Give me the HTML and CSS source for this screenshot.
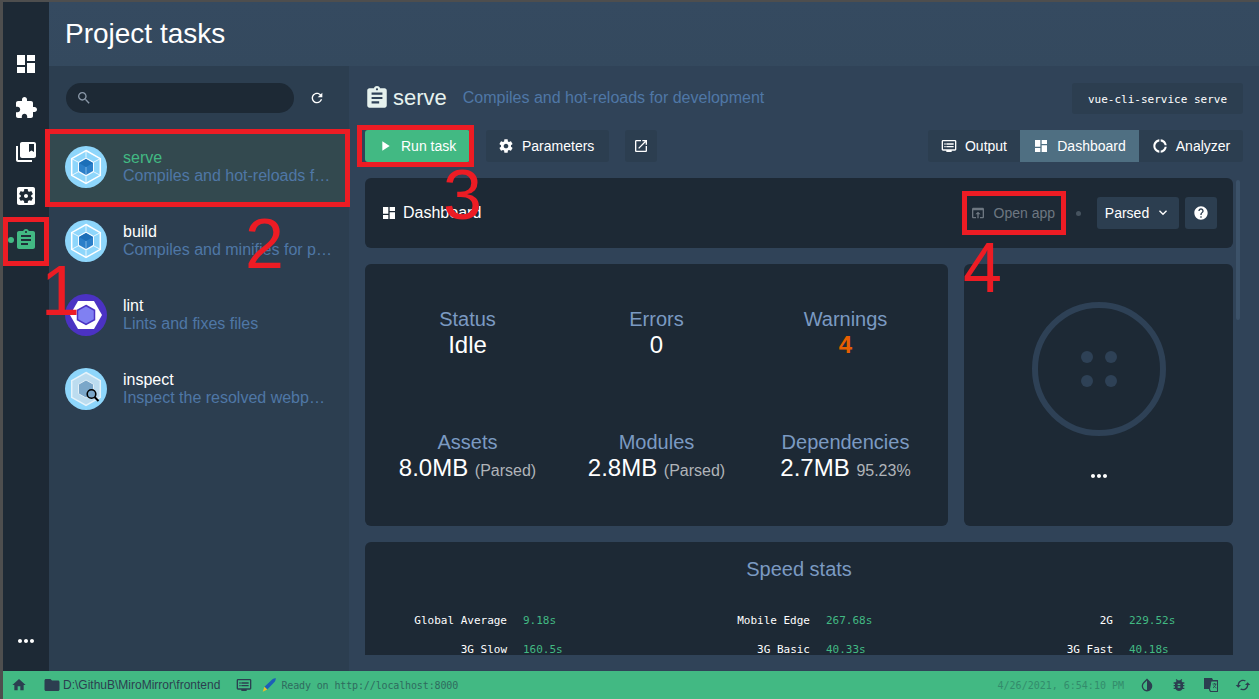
FILE: index.html
```html
<!DOCTYPE html>
<html lang="en">
<head>
    <meta charset="UTF-8">
    <title>Project tasks</title>
    <link rel="stylesheet" href="styles.css">
</head>
<body>
    <svg class="sprite" xmlns="http://www.w3.org/2000/svg">
        <symbol id="i-dashboard" viewBox="0 0 24 24"><path d="M3 13h8V3H3v10zm0 8h8v-6H3v6zm10 0h8V11h-8v10zm0-18v6h8V3h-8z"/></symbol>
        <symbol id="i-extension" viewBox="0 0 24 24"><path d="M20.5 11H19V7c0-1.1-.9-2-2-2h-4V3.5C13 2.12 11.88 1 10.5 1S8 2.12 8 3.5V5H4c-1.1 0-1.99.9-1.99 2v3.8H3.5c1.49 0 2.7 1.21 2.7 2.7s-1.21 2.7-2.7 2.7H2V20c0 1.1.9 2 2 2h3.8v-1.5c0-1.49 1.21-2.7 2.7-2.7 1.49 0 2.7 1.21 2.7 2.7V22H17c1.1 0 2-.9 2-2v-4h1.5c1.38 0 2.5-1.12 2.5-2.5S21.88 11 20.5 11z"/></symbol>
        <symbol id="i-collections" viewBox="0 0 24 24"><path d="M4 6H2v14c0 1.1.9 2 2 2h14v-2H4V6zm16-4H8c-1.1 0-2 .9-2 2v12c0 1.1.9 2 2 2h12c1.1 0 2-.9 2-2V4c0-1.1-.9-2-2-2zm0 10l-2.5-1.5L15 12V4h5v8z"/></symbol>
        <symbol id="i-settings-app" viewBox="0 0 24 24"><path d="M12 10c-1.1 0-2 .9-2 2s.9 2 2 2 2-.9 2-2-.9-2-2-2zm7-7H5c-1.11 0-2 .9-2 2v14c0 1.1.89 2 2 2h14c1.11 0 2-.9 2-2V5c0-1.1-.89-2-2-2zm-1.75 9c0 .23-.02.46-.05.68l1.48 1.16c.13.11.17.3.08.45l-1.4 2.42c-.09.15-.27.21-.43.15l-1.74-.7c-.36.28-.76.51-1.18.69l-.26 1.85c-.03.17-.18.3-.35.3h-2.8c-.17 0-.32-.13-.35-.29l-.26-1.85c-.43-.18-.82-.41-1.18-.69l-1.74.7c-.16.06-.34 0-.43-.15l-1.4-2.42c-.09-.15-.05-.34.08-.45l1.48-1.16c-.03-.23-.05-.46-.05-.69 0-.23.02-.46.05-.68l-1.48-1.16c-.13-.11-.17-.3-.08-.45l1.4-2.42c.09-.15.27-.21.43-.15l1.74.7c.36-.28.76-.51 1.18-.69l.26-1.85c.03-.17.18-.3.35-.3h2.8c.17 0 .32.13.35.29l.26 1.85c.43.18.82.41 1.18.69l1.74-.7c.16-.06.34 0 .43.15l1.4 2.42c.09.15.05.34-.08.45l-1.48 1.16c.03.23.05.46.05.69z"/></symbol>
        <symbol id="i-assignment" viewBox="0 0 24 24"><path d="M19 3h-4.18C14.4 1.84 13.3 1 12 1c-1.3 0-2.4.84-2.82 2H5c-1.1 0-2 .9-2 2v14c0 1.1.9 2 2 2h14c1.1 0 2-.9 2-2V5c0-1.1-.9-2-2-2zm-7 0c.55 0 1 .45 1 1s-.45 1-1 1-1-.45-1-1 .45-1 1-1zm2 14H7v-2h7v2zm3-4H7v-2h10v2zm0-4H7V7h10v2z"/></symbol>
        <symbol id="i-more" viewBox="0 0 24 24"><path d="M6 10c-1.1 0-2 .9-2 2s.9 2 2 2 2-.9 2-2-.9-2-2-2zm12 0c-1.1 0-2 .9-2 2s.9 2 2 2 2-.9 2-2-.9-2-2-2zm-6 0c-1.1 0-2 .9-2 2s.9 2 2 2 2-.9 2-2-.9-2-2-2z"/></symbol>
        <symbol id="i-search" viewBox="0 0 24 24"><path d="M15.5 14h-.79l-.28-.27C15.41 12.59 16 11.11 16 9.5 16 5.91 13.09 3 9.5 3S3 5.91 3 9.5 5.91 16 9.5 16c1.61 0 3.09-.59 4.23-1.57l.27.28v.79l5 4.99L20.49 19l-4.99-5zm-6 0C7.01 14 5 11.99 5 9.5S7.01 5 9.5 5 14 7.01 14 9.5 11.99 14 9.5 14z"/></symbol>
        <symbol id="i-refresh" viewBox="0 0 24 24"><path d="M17.65 6.35C16.2 4.9 14.21 4 12 4c-4.42 0-7.99 3.58-7.99 8s3.57 8 7.99 8c3.73 0 6.84-2.55 7.73-6h-2.08c-.82 2.33-3.04 4-5.65 4-3.31 0-6-2.69-6-6s2.69-6 6-6c1.66 0 3.14.69 4.22 1.78L13 11h7V4l-2.35 2.35z"/></symbol>
        <symbol id="i-play" viewBox="0 0 24 24"><path d="M8 5v14l11-7z"/></symbol>
        <symbol id="i-settings" viewBox="0 0 24 24"><path d="M19.43 12.98c.04-.32.07-.64.07-.98s-.03-.66-.07-.98l2.11-1.65c.19-.15.24-.42.12-.64l-2-3.46c-.12-.22-.39-.3-.61-.22l-2.49 1c-.52-.4-1.08-.73-1.69-.98l-.38-2.65C14.46 2.18 14.25 2 14 2h-4c-.25 0-.46.18-.49.42l-.38 2.65c-.61.25-1.17.59-1.69.98l-2.49-1c-.23-.09-.49 0-.61.22l-2 3.46c-.13.22-.07.49.12.64l2.11 1.65c-.04.32-.07.65-.07.98s.03.66.07.98l-2.11 1.65c-.19.15-.24.42-.12.64l2 3.46c.12.22.39.3.61.22l2.49-1c.52.4 1.08.73 1.69.98l.38 2.65c.03.24.24.42.49.42h4c.25 0 .46-.18.49-.42l.38-2.65c.61-.25 1.17-.59 1.69-.98l2.49 1c.23.09.49 0 .61-.22l2-3.46c.12-.22.07-.49-.12-.64l-2.11-1.65zM12 15.5c-1.93 0-3.5-1.57-3.5-3.5s1.57-3.5 3.5-3.5 3.5 1.57 3.5 3.5-1.57 3.5-3.5 3.5z"/></symbol>
        <symbol id="i-open" viewBox="0 0 24 24"><path d="M19 19H5V5h7V3H5c-1.11 0-2 .9-2 2v14c0 1.1.89 2 2 2h14c1.1 0 2-.9 2-2v-7h-2v7zM14 3v2h3.59l-9.83 9.83 1.41 1.41L19 6.41V10h2V3h-7z"/></symbol>
        <symbol id="i-dvr" viewBox="0 0 24 24"><path d="M21 3H3c-1.1 0-2 .9-2 2v12c0 1.1.9 2 2 2h5v2h8v-2h5c1.1 0 1.99-.9 1.99-2L23 5c0-1.1-.9-2-2-2zm0 14H3V5h18v12zm-2-9H8v2h11V8zm0 4H8v2h11v-2zM7 8H5v2h2V8zm0 4H5v2h2v-2z"/></symbol>
        <symbol id="i-donut" viewBox="0 0 24 24"><path d="M11 5.08V2c-5 .5-9 4.81-9 10s4 9.5 9 10v-3.08c-3-.48-6-3.4-6-6.92s3-6.44 6-6.92zM18.97 11H22c-.47-5-4-8.53-9-9v3.08C16 5.51 18.54 8 18.97 11zM13 18.92V22c5-.47 8.53-4 9-9h-3.03c-.43 3-2.97 5.49-5.97 5.92z"/></symbol>
        <symbol id="i-help" viewBox="0 0 24 24"><path d="M12 2C6.48 2 2 6.48 2 12s4.48 10 10 10 10-4.48 10-10S17.52 2 12 2zm1 17h-2v-2h2v2zm2.07-7.75l-.9.92C13.45 12.9 13 13.5 13 15h-2v-.5c0-1.1.45-2.1 1.17-2.83l1.24-1.26c.37-.36.59-.86.59-1.41 0-1.1-.9-2-2-2s-2 .9-2 2H8c0-2.21 1.79-4 4-4s4 1.79 4 4c0 .88-.36 1.68-.93 2.25z"/></symbol>
        <symbol id="i-browser" viewBox="0 0 24 24"><path d="M19 4H5c-1.11 0-2 .9-2 2v12c0 1.1.89 2 2 2h4v-2H5V8h14v10h-4v2h4c1.1 0 2-.9 2-2V6c0-1.1-.89-2-2-2zm-7 6l-4 4h3v6h2v-6h3l-4-4z"/></symbol>
        <symbol id="i-down" viewBox="0 0 24 24"><path d="M7.41 7.84L12 12.42l4.59-4.58L18 9.25l-6 6-6-6z"/></symbol>
        <symbol id="i-home" viewBox="0 0 24 24"><path d="M10 20v-6h4v6h5v-8h3L12 3 2 12h3v8z"/></symbol>
        <symbol id="i-folder" viewBox="0 0 24 24"><path d="M10 4H4c-1.1 0-1.99.9-1.99 2L2 18c0 1.1.9 2 2 2h16c1.1 0 2-.9 2-2V8c0-1.1-.9-2-2-2h-8l-2-2z"/></symbol>
        <symbol id="i-invert" viewBox="0 0 24 24"><path d="M17.66 7.93L12 2.27 6.34 7.93c-3.12 3.12-3.12 8.19 0 11.31C7.9 20.8 9.95 21.58 12 21.58c2.05 0 4.1-.78 5.66-2.34 3.12-3.12 3.12-8.19 0-11.31zM12 19.59c-1.6 0-3.11-.62-4.24-1.76C6.62 16.69 6 15.19 6 13.59s.62-3.11 1.76-4.24L12 5.1v14.49z"/></symbol>
        <symbol id="i-bug" viewBox="0 0 24 24"><path d="M20 8h-2.81c-.45-.78-1.07-1.45-1.82-1.96L17 4.41 15.59 3l-2.17 2.17C12.96 5.06 12.49 5 12 5c-.49 0-.96.06-1.41.17L8.41 3 7 4.41l1.62 1.63C7.88 6.55 7.26 7.22 6.81 8H4v2h2.09c-.05.33-.09.66-.09 1v1H4v2h2v1c0 .34.04.67.09 1H4v2h2.81c1.04 1.79 2.97 3 5.19 3s4.15-1.21 5.19-3H20v-2h-2.09c.05-.33.09-.66.09-1v-1h2v-2h-2v-1c0-.34-.04-.67-.09-1H20V8zm-6 8h-4v-2h4v2zm0-4h-4v-2h4v2z"/></symbol>
        <symbol id="i-cached" viewBox="0 0 24 24"><path d="M19 8l-4 4h3c0 3.31-2.69 6-6 6-1.01 0-1.97-.25-2.8-.7l-1.46 1.46C8.97 19.54 10.43 20 12 20c4.42 0 8-3.58 8-8h3l-4-4zM6 12c0-3.31 2.69-6 6-6 1.01 0 1.97.25 2.8.7l1.46-1.46C15.03 4.46 13.57 4 12 4c-4.42 0-8 3.58-8 8H1l4 4 4-4H6z"/></symbol>
        <symbol id="i-webpack" viewBox="0 0 42 42">
            <circle cx="21" cy="21" r="21" fill="#8ed6fb"/>
            <path d="M21 4.500 35.300 12.700v16.600L21 37.500 6.700 29.300V12.700z" fill="none" stroke="#fff" stroke-width="1.500"/>
            <path d="M21 11.500 29 16v10L21 30.500 13 26V16z" fill="#fff" fill-opacity=".9"/>
            <path d="M21 13 28 17v8L21 29 14 25v-8z" fill="#2b7fc9"/>
            <path d="M21 13 28 17 21 21 14 17z" fill="#1c6fb8"/>
            <path d="M6.700 12.700 13 16M35.300 12.700 29 16M21 37.500v-7M21 4.500v7M6.700 29.300 13 26M35.300 29.300 29 26" fill="none" stroke="#fff" stroke-opacity=".8"/>
            <path d="M21 21v8" fill="none" stroke="#bfe3f7" stroke-opacity=".7" stroke-width=".8"/>
        </symbol>
    </svg>

    <div class="app">
        <div class="app-body">
            <nav class="sidebar">
                <a class="nav-item"><svg class="icon-24"><use href="#i-dashboard"/></svg></a>
                <a class="nav-item"><svg class="icon-24"><use href="#i-extension"/></svg></a>
                <a class="nav-item"><svg class="icon-24"><use href="#i-collections"/></svg></a>
                <a class="nav-item"><svg class="icon-24"><use href="#i-settings-app"/></svg></a>
                <a class="nav-item active"><span class="nav-dot"></span><svg class="icon-24"><use href="#i-assignment"/></svg></a>
                <a class="nav-more"><svg class="icon-24"><use href="#i-more"/></svg></a>
            </nav>

            <div class="page">
                <header class="page-head">
                    <h1>Project tasks</h1>
                </header>

                <div class="page-body">
                    <aside class="task-pane">
                        <div class="search-row">
                            <div class="search-box"><svg class="icon-16"><use href="#i-search"/></svg></div>
                            <svg class="icon-16 refresh"><use href="#i-refresh"/></svg>
                        </div>
                        <ul class="task-list">
                            <li class="task selected">
                                <svg class="task-icon"><use href="#i-webpack"/></svg>
                                <div class="task-text">
                                    <div class="task-name">serve</div>
                                    <div class="task-desc">Compiles and hot-reloads for development</div>
                                </div>
                            </li>
                            <li class="task">
                                <svg class="task-icon"><use href="#i-webpack"/></svg>
                                <div class="task-text">
                                    <div class="task-name">build</div>
                                    <div class="task-desc">Compiles and minifies for production</div>
                                </div>
                            </li>
                            <li class="task">
                                <svg class="task-icon" viewBox="0 0 42 42">
                                    <circle cx="21" cy="21" r="21" fill="#4b32c3"/>
                                    <path d="M13 7h16l8 14-8 14H13L5 21z" fill="#fff"/>
                                    <path d="M21 11.500 29.500 16.300v9.400L21 30.500l-8.500-4.800v-9.400z" fill="#8080f2" stroke="#4b32c3" stroke-width="1.500"/>
                                </svg>
                                <div class="task-text">
                                    <div class="task-name">lint</div>
                                    <div class="task-desc">Lints and fixes files</div>
                                </div>
                            </li>
                            <li class="task">
                                <svg class="task-icon" viewBox="0 0 42 42">
                                    <circle cx="21" cy="21" r="21" fill="#8ed6fb"/>
                                    <path d="M21 4.500 35.300 12.700v16.600L21 37.500 6.700 29.300V12.700z" fill="#bcdcef" stroke="#e6f3fa" stroke-width="1.500"/>
                                    <path d="M21 12 28.500 16.300v9.400L21 30l-7.500-4.300v-9.400z" fill="#7ba7c9" stroke="#dfeef7"/>
                                    <circle cx="26.500" cy="26" r="4.300" fill="#7ba7c9" stroke="#000" stroke-width="1.600"/>
                                    <path d="M29.500 29 33.500 33" stroke="#000" stroke-width="2"/>
                                </svg>
                                <div class="task-text">
                                    <div class="task-name">inspect</div>
                                    <div class="task-desc">Inspect the resolved webpack config</div>
                                </div>
                            </li>
                        </ul>
                    </aside>

                    <main class="task-detail">
                        <div class="detail-head">
                            <svg class="head-icon"><use href="#i-assignment"/></svg>
                            <span class="detail-name">serve</span>
                            <span class="detail-desc">Compiles and hot-reloads for development</span>
                            <code class="command">vue-cli-service serve</code>
                        </div>

                        <div class="toolbar">
                            <button class="btn btn-run"><svg class="icon-16"><use href="#i-play"/></svg>Run task</button>
                            <button class="btn"><svg class="icon-16"><use href="#i-settings"/></svg>Parameters</button>
                            <button class="btn btn-square"><svg class="icon-16"><use href="#i-open"/></svg></button>
                            <div class="tabs">
                                <button class="tab tab-output"><svg class="icon-16"><use href="#i-dvr"/></svg>Output</button>
                                <button class="tab tab-dashboard active"><svg class="icon-16"><use href="#i-dashboard"/></svg>Dashboard</button>
                                <button class="tab tab-analyzer"><svg class="icon-16"><use href="#i-donut"/></svg>Analyzer</button>
                            </div>
                        </div>

                        <div class="scroll-area">
                            <span class="scroll-thumb"></span>
                            <section class="card dash-bar">
                                <svg class="icon-16"><use href="#i-dashboard"/></svg>
                                <span class="dash-title">Dashboard</span>
                                <button class="open-app"><svg class="icon-16"><use href="#i-browser"/></svg>Open app</button>
                                <span class="bar-dot"></span>
                                <button class="small-btn select">Parsed<svg class="icon-16"><use href="#i-down"/></svg></button>
                                <button class="small-btn help"><svg class="icon-16"><use href="#i-help"/></svg></button>
                            </section>

                            <div class="card-row">
                                <section class="card stats">
                                    <div class="stat"><div class="stat-label">Status</div><div class="stat-value">Idle</div></div>
                                    <div class="stat"><div class="stat-label">Errors</div><div class="stat-value">0</div></div>
                                    <div class="stat"><div class="stat-label">Warnings</div><div class="stat-value warn">4</div></div>
                                    <div class="stat"><div class="stat-label">Assets</div><div class="stat-value">8.0MB <small>(Parsed)</small></div></div>
                                    <div class="stat"><div class="stat-label">Modules</div><div class="stat-value">2.8MB <small>(Parsed)</small></div></div>
                                    <div class="stat"><div class="stat-label">Dependencies</div><div class="stat-value">2.7MB <small>95.23%</small></div></div>
                                </section>
                                <section class="card progress">
                                    <svg class="progress-ring" viewBox="0 0 134 134">
                                        <circle cx="67" cy="67" r="64" fill="none" stroke="#2e4156" stroke-width="6"/>
                                        <circle cx="55" cy="55" r="6" fill="#2e4156"/>
                                        <circle cx="79" cy="55" r="6" fill="#2e4156"/>
                                        <circle cx="55" cy="79" r="6" fill="#2e4156"/>
                                        <circle cx="79" cy="79" r="6" fill="#2e4156"/>
                                    </svg>
                                    <svg class="icon-24"><use href="#i-more"/></svg>
                                </section>
                            </div>

                            <section class="card speed">
                                <h2>Speed stats</h2>
                                <div class="speed-grid">
                                    <div class="speed-item"><span class="speed-label">Global Average</span><span class="speed-value">9.18s</span></div>
                                    <div class="speed-item"><span class="speed-label">Mobile Edge</span><span class="speed-value">267.68s</span></div>
                                    <div class="speed-item"><span class="speed-label">2G</span><span class="speed-value">229.52s</span></div>
                                    <div class="speed-item"><span class="speed-label">3G Slow</span><span class="speed-value">160.5s</span></div>
                                    <div class="speed-item"><span class="speed-label">3G Basic</span><span class="speed-value">40.33s</span></div>
                                    <div class="speed-item"><span class="speed-label">3G Fast</span><span class="speed-value">40.18s</span></div>
                                </div>
                            </section>
                        </div>
                    </main>
                </div>
            </div>
        </div>

        <footer class="statusbar">
            <svg class="icon-16 st-home"><use href="#i-home"/></svg>
            <svg class="icon-18 st-folder"><use href="#i-folder"/></svg>
            <span class="st-path">D:\GithuB\MiroMirror\frontend</span>
            <svg class="icon-16 st-log"><use href="#i-dvr"/></svg>
            <svg class="icon-16 st-pen" viewBox="0 0 14 14">
                <path d="M3 8.500 10 2c1.500-1 3-.8 3-.8s0 1.500-1 3L5.500 11z" fill="#1c5fb8"/>
                <path d="M3 8.500 5.500 11 1.500 13z" fill="#e8c02c"/>
            </svg>
            <span class="st-message">Ready on http://localhost:8000</span>
            <span class="st-date">4/26/2021, 6:54:10 PM</span>
            <svg class="icon-16 st-right"><use href="#i-invert"/></svg>
            <svg class="icon-16 st-right"><use href="#i-bug"/></svg>
            <svg class="icon-16 st-right" viewBox="0 0 16 16">
                <path d="M1 1h8l1 2h5v12H7l-1-3H1z" fill="#2c3e50"/>
                <path d="M8 4h6.500v10.500H7.500L6.500 12z" fill="#42b983" stroke="#2c3e50"/>
                <path d="M9.500 7h4M11.500 6v1M10 11c1.500-1 2.500-2.500 2.800-4M10.500 8.500c.5 1 1.500 2 3 2.500" fill="none" stroke="#2c3e50" stroke-width=".8"/>
            </svg>
            <svg class="icon-16 st-right"><use href="#i-cached"/></svg>
        </footer>
    </div>

    <!-- annotations drawn over the screenshot -->
    <div class="mark mark-nav"></div>
    <div class="mark mark-task"></div>
    <div class="mark mark-run"></div>
    <div class="mark mark-open"></div>
    <span class="digit digit-1">1</span>
    <span class="digit digit-2">2</span>
    <span class="digit digit-3">3</span>
    <span class="digit digit-4">4</span>
</body>
</html>
```
FILE: styles.css
```css
*{
    margin:0;
    padding:0;
    box-sizing:border-box;
}
html,body{
    height:100%;
    overflow:hidden;
}
body{
    position:relative;
    background:#2c3e50;
    color:#fff;
    font-family:"Liberation Sans", Arial, sans-serif;
    font-size:14px;
}
ul{
    list-style:none;
}
button{
    border:0;
    color:inherit;
    font:inherit;
    background:none;
    white-space:nowrap;
}
svg{
    fill:currentColor;
    flex:none;
}
.sprite{
    display:none;
}
.icon-16{
    width:16px;
    height:16px;
}
.icon-18{
    width:18px;
    height:18px;
}
.icon-24{
    width:24px;
    height:24px;
}

/* layout */
.app{
    height:699px;
    display:flex;
    flex-direction:column;
    border-top:2px solid #4e4e4e;
    border-left:3px solid #4e4e4e;
}
.app-body{
    flex:1;
    min-height:0;
    display:flex;
}
.sidebar{
    width:46px;
    display:flex;
    flex-direction:column;
    align-items:center;
    padding:40px 0 18px;
    background:#1d2935;
}
.nav-item{
    position:relative;
    width:100%;
    height:44px;
    display:flex;
    align-items:center;
    justify-content:center;
}
.nav-item.active{
    color:#42b983;
    background:#1f2e38;
}
.nav-dot{
    position:absolute;
    left:5px;
    top:19px;
    width:6px;
    height:6px;
    border-radius:50%;
    background:#42b983;
}
.nav-more{
    margin-top:auto;
    height:24px;
}
.page{
    flex:1;
    min-width:0;
    display:flex;
    flex-direction:column;
}
.page-head{
    height:64px;
    padding:0 16px;
    display:flex;
    align-items:center;
    background:linear-gradient(#354a60, #34495e);
}
.page-head h1{
    font-size:28px;
    font-weight:400;
}
.page-body{
    flex:1;
    min-height:0;
    display:flex;
}

/* task list */
.task-pane{
    width:300px;
    background:#2c3e50;
}
.search-row{
    height:64px;
    padding:17px 0 0 17px;
    display:flex;
}
.search-box{
    width:228px;
    height:30px;
    border-radius:15px;
    background:#1d2935;
    color:#8a98a8;
    padding:7px 10px;
}
.search-box .icon-16{
    display:block;
}
.refresh{
    margin:7px 0 0 15px;
}
.task{
    height:74px;
    padding:0 16px;
    display:flex;
    align-items:center;
}
.task.selected{
    background:#33494f;
}
.task-icon{
    width:42px;
    height:42px;
    margin-right:16px;
}
.task-text{
    min-width:0;
    flex:1;
    line-height:18px;
    font-size:16px;
}
.task-name{
    font-size:16px;
}
.selected .task-name{
    color:#42b983;
}
.task-desc{
    color:#4f77a6;
    white-space:nowrap;
    overflow:hidden;
    text-overflow:ellipsis;
}

/* task detail */
.task-detail{
    flex:1;
    min-width:0;
    display:flex;
    flex-direction:column;
    background:#304358;
    padding:0 16px;
}
.detail-head{
    height:64px;
    display:flex;
    align-items:center;
    flex:none;
}
.head-icon{
    width:26px;
    height:26px;
    color:#e6f2ee;
    margin-left:-1px;
}
.detail-name{
    font-size:22px;
    color:#e6f2ee;
    margin:0 16px 0 3px;
}
.detail-desc{
    font-size:16px;
    color:#4f77a6;
}
.command{
    margin-left:auto;
    height:31px;
    width:171px;
    text-align:center;
    font:11px/33px "DejaVu Sans Mono", monospace;
    background:#2c3e50;
    border-radius:3px;
}
.toolbar{
    height:48px;
    flex:none;
    display:flex;
    align-items:flex-start;
}
.btn{
    height:32px;
    padding:0 15px 0 12px;
    display:flex;
    align-items:center;
    gap:8px;
    margin-right:16px;
    background:#2c3e50;
    border-radius:3px;
}
.btn-run{
    width:105px;
    background:#42b983;
}
.btn-square{
    width:32px;
    padding:0 8px;
}
.tabs{
    margin-left:auto;
    height:32px;
    display:flex;
    background:#2c3e50;
    border-radius:3px;
}
.tab{
    height:32px;
    display:flex;
    align-items:center;
    justify-content:center;
    gap:8px;
}
.tab-output{
    width:92px;
}
.tab-dashboard{
    width:119px;
}
.tab-analyzer{
    width:104px;
}
.tab.active{
    background:#4f6f82;
}

/* dashboard cards */
.scroll-area{
    position:relative;
    flex:1;
    min-height:0;
    overflow:hidden;
    margin-bottom:16px;
    display:flex;
    flex-direction:column;
    gap:16px;
}
.scroll-thumb{
    position:absolute;
    left:871px;
    top:2px;
    width:4px;
    height:140px;
    border-radius:2px;
    background:#3c5269;
}
.card{
    flex:none;
    width:868px;
    background:#1d2935;
    border-radius:6px;
}
.dash-bar{
    height:70px;
    padding:0 16px;
    display:flex;
    align-items:center;
}
.dash-title{
    font-size:16px;
    margin-left:6px;
}
.open-app{
    margin-left:auto;
    display:flex;
    align-items:center;
    gap:8px;
    color:#6d7781;
    height:32px;
}
.bar-dot{
    width:5px;
    height:5px;
    border-radius:50%;
    background:#46535f;
    margin:0 16px 0 21px;
}
.small-btn{
    height:32px;
    background:#2c3e50;
    border-radius:3px;
    display:flex;
    align-items:center;
    justify-content:center;
}
.select{
    width:82px;
    gap:6px;
    margin-right:6px;
}
.help{
    width:32px;
}
.card-row{
    flex:none;
    display:flex;
    gap:16px;
    width:868px;
}
.stats{
    width:583px;
    height:262px;
    padding:43px 8px 0;
    display:grid;
    grid-template-columns:repeat(3, 189px);
    grid-auto-rows:123px;
    text-align:center;
}
.stat-label{
    font-size:20px;
    line-height:24px;
    color:#7b9ac2;
}
.stat-value{
    font-size:24px;
    line-height:27px;
}
.stat-value small{
    font-size:16px;
    color:#b0b4b9;
}
.stat-value.warn{
    color:#e65f00;
    font-weight:700;
}
.progress{
    width:269px;
    height:262px;
    display:flex;
    flex-direction:column;
    align-items:center;
    padding-top:38px;
}
.progress-ring{
    width:134px;
    height:134px;
    margin-bottom:28px;
}
.speed{
    height:200px;
    overflow:hidden;
}
.speed h2{
    font-size:20px;
    font-weight:400;
    color:#7b9ac2;
    text-align:center;
    padding-top:15px;
    line-height:24px;
    margin-bottom:25px;
}
.speed-grid{
    display:grid;
    grid-template-columns:303px 303px 1fr;
    grid-auto-rows:29px;
    font:11px/29px "DejaVu Sans Mono", monospace;
}
.speed-item{
    display:flex;
    gap:16px;
}
.speed-label{
    width:142px;
    text-align:right;
}
.speed-value{
    color:#42b983;
}

/* status bar */
.statusbar{
    height:28px;
    flex:none;
    display:flex;
    align-items:center;
    background:#42b983;
    color:#2c3e50;
    padding:0 8px;
    font-size:12px;
}
.st-folder{
    margin-left:16px;
}
.st-path{
    margin-left:2px;
}
.st-log{
    margin-left:16px;
}
.st-pen{
    margin-left:9px;
}
.st-message{
    margin-left:4px;
    font:10px "DejaVu Sans Mono", monospace;
    letter-spacing:-.13px;
    color:#2f6b5f;
}
.st-date{
    margin-left:auto;
    margin-right:15px;
    font:10px "DejaVu Sans Mono", monospace;
    color:#338c6c;
}
.st-right + .st-right{
    margin-left:16px;
}

/* red annotations */
.mark{
    position:absolute;
    border:5px solid #ed1c24;
}
.mark-nav{
    left:3px;
    top:217px;
    width:46px;
    height:49px;
}
.mark-task{
    left:45px;
    top:129px;
    width:305px;
    height:78px;
}
.mark-run{
    left:357px;
    top:125px;
    width:117px;
    height:42px;
}
.mark-open{
    left:962px;
    top:191px;
    width:104px;
    height:44px;
}
.digit{
    position:absolute;
    color:#ed1c24;
    font-size:70px;
    line-height:70px;
}
.digit-1{
    left:41px;
    top:256px;
}
.digit-2{
    left:245px;
    top:209px;
}
.digit-3{
    left:443px;
    top:160px;
}
.digit-4{
    left:963px;
    top:233px;
}
```
